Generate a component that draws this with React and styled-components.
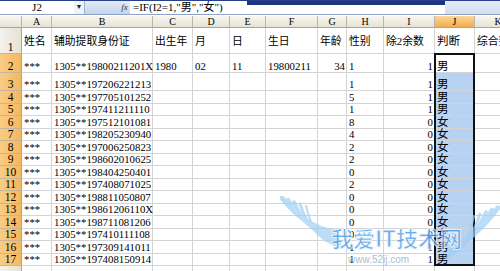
import React from 'react';
import styled, { createGlobalStyle } from 'styled-components';

const GlobalStyle = createGlobalStyle`
  html, body {
    margin: 0;
    padding: 0;
    background: #fff;
    overflow: hidden;
  }
`;

const COLS = [22, 30, 101, 40, 37, 36, 52, 29, 37, 51, 40, 47, 60];
const LETTERS = ['A', 'B', 'C', 'D', 'E', 'F', 'G', 'H', 'I', 'J', 'K', 'L'];
const ROW_H = [12, 26, 19, 18, 13, 12, 13, 12, 13, 12, 13, 12, 13, 12, 13, 12, 13, 12, 20];
const RIGHT = [6, 8];

const ids = [
  ['1305**197206221213', '1', '1', '男'],
  ['1305**197705101252', '5', '1', '男'],
  ['1305**197411211110', '1', '1', '男'],
  ['1305**197512101081', '8', '0', '女'],
  ['1305**198205230940', '4', '0', '女'],
  ['1305**197006250823', '2', '0', '女'],
  ['1305**198602010625', '2', '0', '女'],
  ['1305**198404250401', '0', '0', '女'],
  ['1305**197408071025', '2', '0', '女'],
  ['1305**198811050807', '0', '0', '女'],
  ['1305**19861206110X', '0', '0', '女'],
  ['1305**198711081206', '0', '0', '女'],
  ['1305**197410111108', '0', '0', '女'],
  ['1305**197309141011', '1', '1', '男'],
  ['1305**197408150914', '1', '1', '男'],
];

const rows = [
  ['姓名', '辅助提取身份证', '出生年', '月', '日', '生日', '年龄', '性别', '除2余数', '判断', '综合判断', ''],
  ['***', '1305**19800211201X', '1980', '02', '11', '19800211', '34', '1', '1', '男', '', ''],
  ...ids.map(([id, h, i, j]) => ['***', id, '', '', '', '', '', h, i, j, '', '']),
  ['', '', '', '', '', '', '', '', '', '', '', ''],
];

const Screen = styled.div`
  position: relative;
  width: 500px;
  height: 271px;
  overflow: hidden;
  font-family: 'Liberation Serif', 'Noto Sans CJK SC', serif;
  color: #000;
`;

const FormulaBar = styled.div`
  display: flex;
  height: 13px;
  border-top: 1px solid #27408b;
  border-bottom: 1px solid #8da2c4;
  background: #d6e2f4;
  font-size: 11px;
  line-height: 12px;
`;

const NameBox = styled.div`
  width: 74px;
  background: #fff;
  text-align: center;
`;

const DropButton = styled.div`
  width: 10px;
  background: #eef3fb;
  font-size: 7px;
  text-align: center;
  color: #222;
  border-right: 1px solid #9fb2d2;
`;

const Gap = styled.div`
  width: 34px;
  background: linear-gradient(#e3ecf9, #c4d5ee);
`;

const FxButton = styled.div`
  width: 11px;
  font-style: italic;
  font-size: 9px;
  color: #333;
  text-align: center;
  background: linear-gradient(#e3ecf9, #c4d5ee);
`;

const FormulaInput = styled.div`
  flex: 1;
  padding-left: 3px;
  white-space: nowrap;
  background:
    linear-gradient(#1b3486, #1b3486) 117px 0 / 198px 4px no-repeat,
    linear-gradient(#e4ecf8, #d3def0) 315px 0 / 70px 13px no-repeat,
    #fff;
`;

const Sheet = styled.div`
  display: grid;
  grid-template-columns: ${COLS.map((c) => c + 'px').join(' ')};
  grid-template-rows: ${ROW_H.map((r) => r + 'px').join(' ')};
  margin-top: 1px;
  font-size: 10.8px;
`;

const placed = (p) => `grid-row: ${p.$row}; grid-column: ${p.$col};`;

const ColHead = styled.div`
  ${placed}
  display: flex;
  align-items: center;
  justify-content: center;
  font-size: 10px;
  border-right: 1px solid #b9b7a8;
  border-bottom: 1px solid #a9a794;
  background: ${(p) =>
    p.$active ? 'linear-gradient(#fbd79a, #f2ad4e)' : 'linear-gradient(#f7f6f0, #e6e3d4)'};
`;

const RowHead = styled.div`
  ${placed}
  display: flex;
  align-items: flex-end;
  justify-content: center;
  line-height: 12px;
  font-size: 11.5px;
  border-right: 1px solid #a9a794;
  border-bottom: 1px solid #c9b69a;
  background: ${(p) =>
    p.$active ? 'linear-gradient(90deg, #f9cd84, #f4b860)' : 'linear-gradient(90deg, #f3f2ec, #e6e3d4)'};
`;

const Cell = styled.div`
  ${placed}
  display: flex;
  align-items: ${(p) => (p.$mid ? 'center' : 'flex-end')};
  justify-content: ${(p) => (p.$right ? 'flex-end' : 'flex-start')};
  padding: 0 1px 0 2px;
  line-height: 12px;
  white-space: nowrap;
  border-right: 1px solid #d4d4d4;
  border-bottom: 1px solid #d4d4d4;
  background: ${(p) => (p.$sel ? '#b7d3f1' : '#fff')};
  font-size: ${(p) => (p.$big ? '11.5px' : '10.8px')};
  min-width: 0;
`;

const SelBox = styled.div`
  grid-column: 11 / 12;
  grid-row: 3 / 19;
  margin: -1px 0 0 -1px;
  border: 2px solid #111;
  pointer-events: none;
  z-index: 2;
`;

const Watermark = styled.svg`
  position: absolute;
  left: 280px;
  top: 196px;
  pointer-events: none;
  z-index: 3;
`;

function Wings() {
  const feathers = [0, 1, 2, 3, 4];
  return (
    <Watermark width="220" height="75" viewBox="0 0 220 75">
      <g fill="none" stroke="#9fd0f4" strokeLinecap="round" opacity="0.7">
        {feathers.map((i) => (
          <path
            key={'l' + i}
            d={`M${2 + i * 6} ${2 + i * 2} C ${16 + i * 4} ${20 + i * 4}, ${32 + i * 2} ${32 + i * 3}, ${54 + i * 2} ${36 + i * 4}`}
            strokeWidth={5 - i * 0.7}
          />
        ))}
        {feathers.map((i) => (
          <path
            key={'r' + i}
            d={`M${218 - i * 6} ${12 + i * 2} C ${204 - i * 4} ${30 + i * 4}, ${192 - i * 2} ${42 + i * 3}, ${174 - i * 2} ${50 + i * 3}`}
            strokeWidth={5 - i * 0.7}
          />
        ))}
      </g>
      <text
        x="51"
        y="51"
        fontSize="22"
        fontWeight="bold"
        fontFamily="'Noto Sans CJK SC', sans-serif"
        fill="#3f97e6"
        stroke="#eef6fd"
        strokeWidth="1"
        opacity="0.78"
      >
        我爱IT技术网
      </text>
      <text
        x="68"
        y="67"
        fontSize="10"
        fontFamily="'Liberation Sans', sans-serif"
        fill="#9cb4c8"
        opacity="0.85"
      >
        www.52ij.com
      </text>
    </Watermark>
  );
}

export default function App() {
  return (
    <Screen>
      <GlobalStyle />
      <FormulaBar>
        <NameBox>J2</NameBox>
        <DropButton>▼</DropButton>
        <Gap />
        <FxButton>fx</FxButton>
        <FormulaInput>=IF(I2=1,"男","女")</FormulaInput>
      </FormulaBar>
      <Sheet>
        <ColHead $row={1} $col={1} />
        {LETTERS.map((l, i) => (
          <ColHead key={l} $row={1} $col={i + 2} $active={l === 'J'}>
            {l}
          </ColHead>
        ))}
        {rows.map((r, ri) => (
          <React.Fragment key={ri}>
            <RowHead $row={ri + 2} $col={1} $active={ri >= 1 && ri <= 16}>
              {ri + 1}
            </RowHead>
            {r.map((v, ci) => (
              <Cell
                key={ci}
                $row={ri + 2}
                $col={ci + 2}
                $mid={ri === 0}
                $right={ri > 0 && RIGHT.includes(ci)}
                $sel={ci === 9 && ri >= 2 && ri <= 16}
                $big={ci === 9}
              >
                {v}
              </Cell>
            ))}
          </React.Fragment>
        ))}
        <SelBox />
      </Sheet>
      <Wings />
    </Screen>
  );
}
